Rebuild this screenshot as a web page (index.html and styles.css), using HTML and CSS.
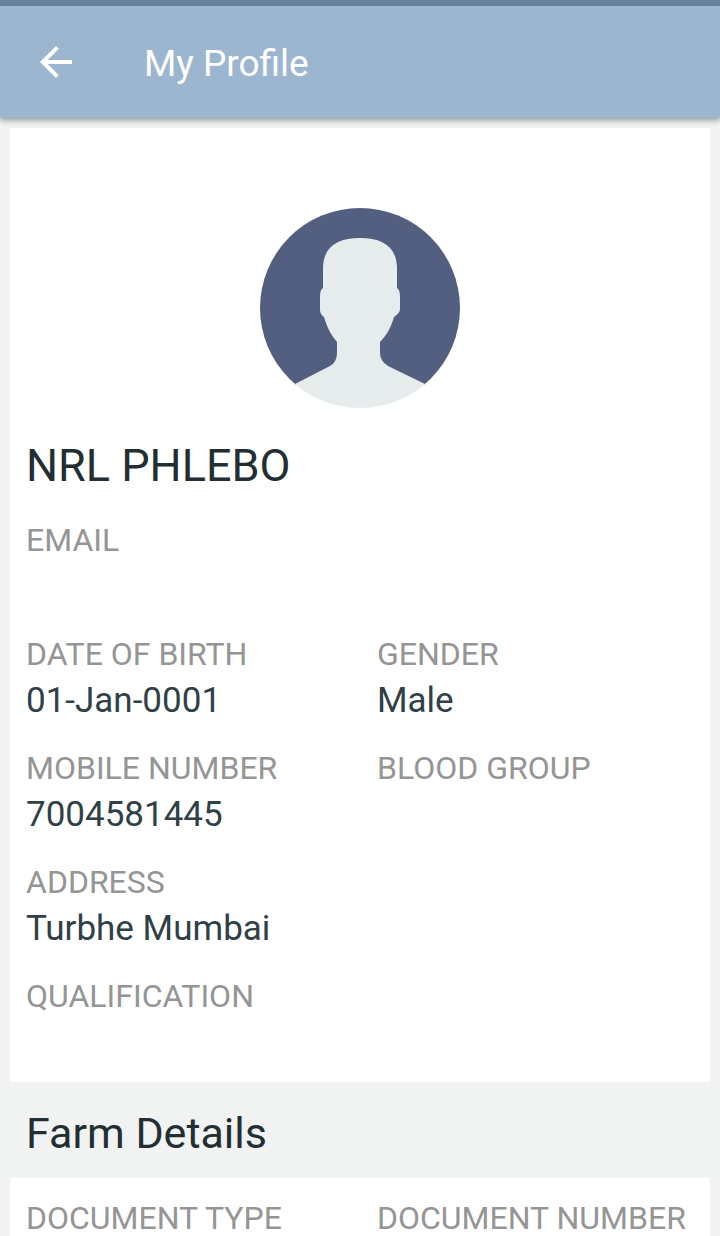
FILE: index.html
```html
<!DOCTYPE html>
<html lang="en">
<head>
    <meta charset="UTF-8">
    <meta name="viewport" content="width=device-width, initial-scale=1.0">
    <title>My Profile</title>
    <link rel="stylesheet" href="styles.css">
</head>
<body>

    <!-- App bar -->
    <header class="app-bar">
        <button class="back-button" type="button" aria-label="Back">
            <svg width="48" height="48" viewBox="0 0 24 24" fill="currentColor">
                <path d="M20 11H7.83l5.59-5.59L12 4l-8 8 8 8 1.41-1.41L7.83 13H20v-2z"/>
            </svg>
        </button>
        <h1 class="app-title">My Profile</h1>
    </header>

    <main class="content">

        <!-- Profile card -->
        <section class="card profile-card">
            <svg class="avatar" viewBox="0 0 200 200">
                <defs>
                    <clipPath id="avatarClip"><circle cx="100" cy="100" r="100"/></clipPath>
                </defs>
                <g clip-path="url(#avatarClip)">
                    <rect width="200" height="177" fill="#535f80"/>
                    <path fill="#e6ecec" d="M100 30C78 30 64 38 63 59V80Q60 82 60 88V102Q60 106 64 109C67 119 71 127 77 134V145Q77 154 70 158L35 176V200H165V176L128 158Q120 153 120 145V134C127 127 131 119 134 109Q140 105 140 101V88Q140 82 137 80V59C136 38 122 30 100 30Z"/>
                </g>
            </svg>
            <h2 class="name">NRL PHLEBO</h2>

            <dl class="details">
                <div class="field wide">
                    <dt>EMAIL</dt>
                    <dd></dd>
                </div>
                <div class="field">
                    <dt>DATE OF BIRTH</dt>
                    <dd>01-Jan-0001</dd>
                </div>
                <div class="field">
                    <dt>GENDER</dt>
                    <dd>Male</dd>
                </div>
                <div class="field">
                    <dt>MOBILE NUMBER</dt>
                    <dd>7004581445</dd>
                </div>
                <div class="field">
                    <dt>BLOOD GROUP</dt>
                    <dd></dd>
                </div>
                <div class="field wide">
                    <dt>ADDRESS</dt>
                    <dd>Turbhe Mumbai</dd>
                </div>
                <div class="field wide">
                    <dt>QUALIFICATION</dt>
                    <dd></dd>
                </div>
            </dl>
        </section>

        <h2 class="section-title">Farm Details</h2>

        <!-- Documents card -->
        <section class="card document-card">
            <dl class="details">
                <div class="field">
                    <dt>DOCUMENT TYPE</dt>
                    <dd></dd>
                </div>
                <div class="field">
                    <dt>DOCUMENT NUMBER</dt>
                    <dd></dd>
                </div>
            </dl>
        </section>
    </main>

</body>
</html>
```
FILE: styles.css
```css
* {
    box-sizing: border-box;
}

body {
    margin: 0;
    height: 100vh;
    display: flex;
    flex-direction: column;
    font-family: Roboto, sans-serif;
    color: #222e32;
    background-color: #f0f3f2;
}

h1, h2, dl, dd {
    margin: 0;
    font-weight: 400;
}

/* App bar */
.app-bar {
    flex: none;
    display: flex;
    align-items: center;
    gap: 64px;
    height: 118px;
    padding: 0 32px;
    border-top: 6px solid #668199;
    color: white;
    background-color: #9cb6cf;
    box-shadow: 0 2px 6px rgba(0, 0, 0, 0.4);
    z-index: 1;
}

.back-button {
    display: flex;
    padding: 0;
    border: none;
    color: inherit;
    background: none;
    cursor: pointer;
}

.app-title {
    padding-top: 4px;
    font-size: 37px;
    line-height: 48px;
}

/* Scrolling area */
.content {
    flex: 1;
    min-height: 0;
    padding: 10px;
    overflow-y: auto;
    scrollbar-width: none;
}

.card {
    padding: 18px 16px 14px;
    background-color: white;
    border-radius: 2px;
}

.profile-card {
    padding-top: 80px;
}

.avatar {
    display: block;
    width: 200px;
    height: 200px;
    margin: 0 auto 30px;
}

.name {
    margin-bottom: 24px;
    font-size: 45px;
    line-height: 56px;
}

.section-title {
    padding: 23px 16px 17px;
    font-size: 43px;
    line-height: 56px;
}

/* Label and value pairs */
.details {
    display: grid;
    grid-template-columns: 1fr 1fr;
    column-gap: 34px;
    row-gap: 20px;
}

.wide {
    grid-column: 1 / -1;
}

.field dt {
    font-size: 32px;
    line-height: 44px;
    color: #959595;
    white-space: nowrap;
}

.field dd {
    min-height: 50px;
    font-size: 35px;
    line-height: 50px;
    color: #304047;
}
```
